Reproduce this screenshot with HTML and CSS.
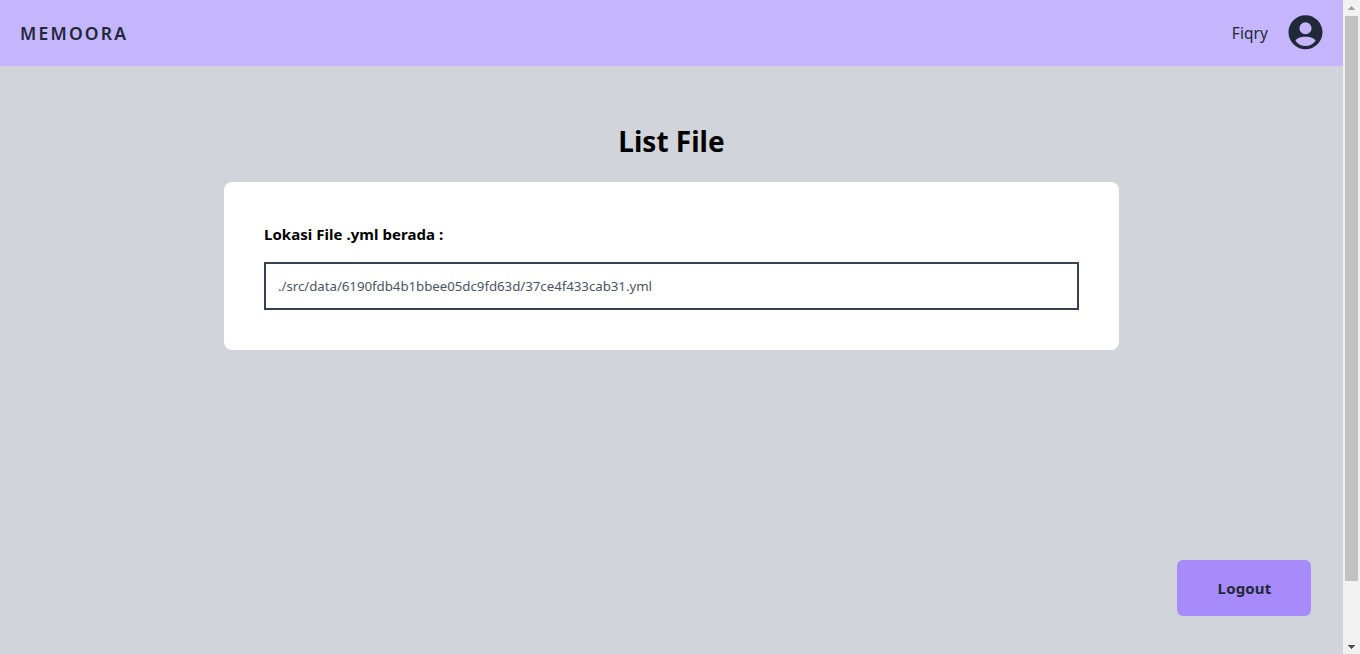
FILE: index.html
```html
<!DOCTYPE html>
<html lang="id">
<head>
<meta charset="utf-8">
<title>Memoora</title>
<link rel="stylesheet" href="styles.css">
</head>
<body>
<div class="window">
  <div class="page">
    <header class="navbar">
      <span class="brand">MEMOORA</span>
      <div class="user">
        <span class="user-name">Fiqry</span>
        <svg class="avatar" viewBox="1.706 1.824 21.176 21.176"><path fill-rule="evenodd" d="M12 2C6.480 2 2 6.480 2 12s4.480 10 10 10 10-4.480 10-10S17.520 2 12 2zm0 4.100a3.550 3.550 0 1 1 0 7.100a3.550 3.550 0 0 1 0-7.100zM12 20C9.600 20 7.450 18.900 6.100 16.900C6.900 15.400 9.200 14.600 12 14.600s5.100.8 5.900 2.300C16.550 18.900 14.400 20 12 20z"/></svg>
      </div>
    </header>
    <main class="content">
      <h1 class="title">List File</h1>
      <section class="card">
        <h2 class="label">Lokasi File .yml berada :</h2>
        <div class="path"><span class="path-text">./src/data/6190fdb4b1bbee05dc9fd63d/37ce4f433cab31.yml</span></div>
      </section>
    </main>
    <footer class="actions"><button class="logout">Logout</button></footer>
  </div>
  <div class="scrollbar">
    <svg class="arrow" viewBox="0 0 17 16" shape-rendering="crispEdges"><path fill="#a3a3a3" d="M8 6h1v1h1v1h1v1h1v1H5V9h1V8h1V7h1z"/></svg>
    <div class="thumb"></div>
    <svg class="arrow" viewBox="0 0 17 16" shape-rendering="crispEdges"><path fill="#505050" d="M5 7h7v1h-1v1h-1v1H9v1H8v-1H7V9H6V8H5z"/></svg>
  </div>
</div>
</body>
</html>
```
FILE: styles.css
```css
* { box-sizing: border-box; }
body { margin: 0; overflow: hidden; font-family: "Noto Sans", "Open Sans", sans-serif; color: #000; }
.window { display: flex; height: 654px; }
.page { flex: 1; display: flex; flex-direction: column; background: #d1d5db; }
.navbar { height: 66px; padding: 0 19px 0 20px; display: flex; align-items: center; justify-content: space-between; background: #c4b5fd; color: #1f2937; }
.brand { font-size: 17.5px; font-weight: 650; letter-spacing: 2.2px; line-height: 28px; }
.user { display: flex; align-items: center; gap: 20px; }
.user-name { padding-top: 2px; font-size: 15.4px; font-weight: 450; letter-spacing: 0.1px; line-height: 24px; }
.avatar { display: block; width: 36px; height: 36px; fill: #1f2937; }
.content { flex: 1; display: flex; flex-direction: column; align-items: center; padding-top: 55px; }
.title { margin: 0 0 21px; font-size: 28px; font-weight: 700; line-height: 40px; white-space: nowrap; }
.card { width: 895px; height: 168px; padding: 40px; background: #fff; border-radius: 8px; }
.label { margin: 0 0 16px; font-size: 15px; font-weight: 700; letter-spacing: 0.04px; line-height: 24px; }
.path { height: 48px; padding: 0 12px; border: 2px solid #374151; display: flex; align-items: center; }
.path-text { font-size: 13.3px; line-height: 20px; letter-spacing: -0.045px; color: #4b5563; white-space: nowrap; }
.actions { display: flex; justify-content: flex-end; padding: 0 32px 38px; }
.logout { width: 134px; height: 56px; padding: 0 0 0 1px; border: 0; border-radius: 6px; background: #a78bfa; color: #1f2937; font: 700 15px/24px "Noto Sans", "Open Sans", sans-serif; letter-spacing: 0.15px; }
.scrollbar { width: 17px; display: flex; flex-direction: column; align-items: center; background: #f1f1f1; }
.arrow { display: block; width: 17px; height: 16px; }
.thumb { width: 13px; height: 565px; margin-bottom: auto; background: #c1c1c1; }
```
